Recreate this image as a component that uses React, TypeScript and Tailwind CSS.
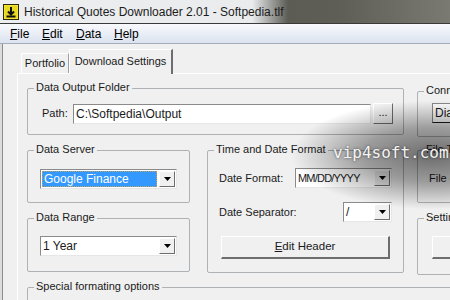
import React from "react";

const ui = { fontFamily: '"Liberation Sans", Arial, sans-serif' };

function Group({
  label,
  className,
  children,
}: {
  label: string;
  className: string;
  children?: React.ReactNode;
}) {
  return (
    <div className={"relative border border-[#aeb2b5] rounded-[2px] shrink-0 " + className}>
      <span className="absolute -top-[8px] left-[6px] px-[2px] leading-[13px] bg-[#f0f0f0] whitespace-nowrap">{label}</span>
      {children}
    </div>
  );
}

function Arrow() {
  return (
    <div className="w-[16px] h-[16px] bg-[#f0f0f0] border border-t-white border-l-white border-r-[#6d6d6d] border-b-[#6d6d6d] flex items-center justify-center shrink-0">
      <svg width="7" height="4" viewBox="0 0 7 4">
        <path d="M0 0H7L3.5 4Z" fill="#000" />
      </svg>
    </div>
  );
}

function Select({
  value,
  className,
  highlighted,
  textClass,
}: {
  value: string;
  className: string;
  highlighted?: boolean;
  textClass?: string;
}) {
  return (
    <div
      className={
        "h-[20px] shrink-0 bg-white border border-t-[#8a8a8a] border-l-[#8a8a8a] border-r-[#e6e6e6] border-b-[#e6e6e6] flex items-center pl-[1px] pr-[1px] " +
        className
      }
    >
      {highlighted ? (
        <div className="flex-1 h-[16px] mr-[2px] bg-[#3399ff] text-white border border-dotted border-[#c8a05a] flex items-center pl-[1px] text-[12px]">
          {value}
        </div>
      ) : (
        <div className={"flex-1 pl-[1px] overflow-hidden whitespace-nowrap " + (textClass ?? "text-[12px]")}>{value}</div>
      )}
      <Arrow />
    </div>
  );
}

export default function App() {
  return (
    <div className="w-[450px] h-[300px] overflow-hidden relative bg-[#f0f0f0] text-[11px] text-[#1a1a1a]" style={ui}>
      {/* Title bar */}
      <div className="h-[23px] flex items-center bg-[linear-gradient(to_right,#eceef0_0%,#e9ebed_56%,#5c5c55_64%,#5e5e57_75%,#7a7a72_100%)]">
        <div className="ml-[3px] w-[16px] h-[16px] shrink-0">
          <svg width="16" height="16" viewBox="0 0 16 16">
            <rect x="0.5" y="0.5" width="15" height="15" fill="#f2e43a" stroke="#2a2a10" />
            <rect x="2" y="2" width="12" height="12" fill="#e8d820" />
            <path d="M8 3V10M5 7.5L8 10.5L11 7.5" stroke="#111" strokeWidth="2" fill="none" />
            <rect x="3.5" y="11.5" width="9" height="2" fill="#111" />
          </svg>
        </div>
        <span className="ml-[5px] text-[12px] text-[#1c1c1c] whitespace-nowrap">
          Historical Quotes Downloader 2.01 - Softpedia.tlf
        </span>
      </div>
      <div className="h-px bg-[#3a3a3a]" />
      {/* Menu bar */}
      <div className="h-[20px] flex items-center pl-[10px] text-[12px] bg-[linear-gradient(to_bottom,#f8f9fc,#dbe3f0)] border-b border-b-[#a3abb8] text-black">
        <span className="w-[32px] shrink-0"><u>F</u>ile</span>
        <span className="w-[34px] shrink-0"><u>E</u>dit</span>
        <span className="w-[38px] shrink-0"><u>D</u>ata</span>
        <span><u>H</u>elp</span>
      </div>
      {/* Body */}
      <div className="flex h-[256px]">
        <div className="w-[2px] shrink-0 bg-[#dcdcdc]" />
        <div className="w-px shrink-0 bg-[#8c8c8c]" />
        <div className="flex-1 min-w-0 pl-[14px] pt-[5px] flex flex-col">
          {/* Tabs */}
          <div className="flex items-end h-[24px] pl-[4px] shrink-0">
            <div className="h-[20px] w-[48px] shrink-0 border-t border-l border-t-white border-l-white border-r border-r-[#a0a0a0] flex items-center justify-center">
              Portfolio
            </div>
            <div className="relative z-10 -mb-px h-[25px] w-[104px] shrink-0 bg-[#f0f0f0] border-t border-l border-t-white border-l-white border-r-2 border-r-[#6d6d6d] flex items-center justify-center pb-[2px]">
              Download Settings
            </div>
          </div>
          {/* Panel */}
          <div className="flex-1 min-h-0 border-t border-l border-t-white border-l-white pl-[9px] pt-[14px] flex flex-col">
            {/* Row 1 */}
            <div className="flex items-start h-[62px] shrink-0">
              <Group label="Data Output Folder" className="w-[377px] h-[47px]">
                <div className="flex items-center pt-[14px] pl-[14px]">
                  <span className="w-[31px] shrink-0">Path:</span>
                  <div className="w-[298px] h-[20px] shrink-0 bg-white border border-t-[#8a8a8a] border-l-[#8a8a8a] border-r-[#e6e6e6] border-b-[#e6e6e6] flex items-center pl-[2px] text-[12px]">
                    C:\Softpedia\Output
                  </div>
                  <div className="ml-[2px] w-[20px] h-[21px] shrink-0 bg-[#f0f0f0] border border-t-white border-l-white border-r-[#6d6d6d] border-b-[#6d6d6d] flex items-center justify-center pb-[3px]">
                    ...
                  </div>
                </div>
              </Group>
              <Group label="Connection" className="ml-[13px] mt-[3px] w-[120px] h-[46px]">
                <div className="pt-[11px] pl-[14px]">
                  <div className="h-[20px] bg-white border border-t-[#8a8a8a] border-l-[#8a8a8a] flex items-center pl-[2px] text-[12px]">
                    Dial-up
                  </div>
                </div>
              </Group>
            </div>
            {/* Row 2 */}
            <div className="flex items-start h-[137px] shrink-0">
              <div className="flex flex-col w-[163px] shrink-0">
                <Group label="Data Server" className="h-[53px]">
                  <div className="pt-[18px] pl-[12px]">
                    <Select value="Google Finance" className="w-[137px]" highlighted />
                  </div>
                </Group>
                <Group label="Data Range" className="mt-[15px] h-[54px]">
                  <div className="pt-[17px] pl-[12px]">
                    <Select value="1 Year" className="w-[137px]" />
                  </div>
                </Group>
              </div>
              <Group label="Time and Date Format" className="ml-[17px] w-[197px] h-[123px]">
                <div className="flex flex-col pt-[17px] pl-[11px] pr-[11px]">
                  <div className="flex items-center justify-between">
                    <span>Date Format:</span>
                    <Select value="MM/DD/YYYY" className="w-[97px]" textClass="text-[11px] tracking-[-0.8px]" />
                  </div>
                  <div className="flex items-center justify-between mt-[14px]">
                    <span>Date Separator:</span>
                    <Select value="/" className="w-[49px]" />
                  </div>
                  <div className="mt-[14px] ml-[2px] w-[169px] h-[23px] bg-[#f0f0f0] border border-t-white border-l-white border-r-2 border-b-2 border-r-[#6d6d6d] border-b-[#6d6d6d] flex items-center justify-center text-[11.5px]">
                    <span><u>E</u>dit Header</span>
                  </div>
                </div>
              </Group>
              <div className="ml-[13px] flex flex-col w-[120px] shrink-0">
                <Group label="File Type" className="h-[53px]">
                  <div className="pt-[21px] pl-[11px] leading-[13px] whitespace-nowrap">File extension</div>
                </Group>
                <Group label="Settings" className="mt-[15px] h-[57px]">
                  <div className="pt-[17px] pl-[14px]">
                    <div className="w-[100px] h-[23px] bg-[#f0f0f0] border border-t-white border-l-white border-r-2 border-b-2 border-r-[#6d6d6d] border-b-[#6d6d6d]" />
                  </div>
                </Group>
              </div>
            </div>
            {/* Row 3 */}
            <Group label="Special formating options" className="w-[500px] h-[40px]" />
          </div>
        </div>
      </div>
      {/* Watermark overlay */}
      <div className="absolute left-[290px] top-[100px] w-[260px] h-[110px] pointer-events-none bg-[radial-gradient(ellipse_at_55%_50%,rgba(0,0,0,0.55)_0%,rgba(0,0,0,0.35)_35%,rgba(0,0,0,0)_70%)]" />
      <div
        className="absolute left-[333px] top-[143px] text-[16px] leading-[20px] text-[#f4f4f4] whitespace-nowrap pointer-events-none [text-shadow:0_0_3px_rgba(0,0,0,0.6)]"
        style={{ fontFamily: '"DejaVu Sans Mono", "Liberation Mono", monospace' }}
      >
        vip4soft.com
      </div>
    </div>
  );
}
